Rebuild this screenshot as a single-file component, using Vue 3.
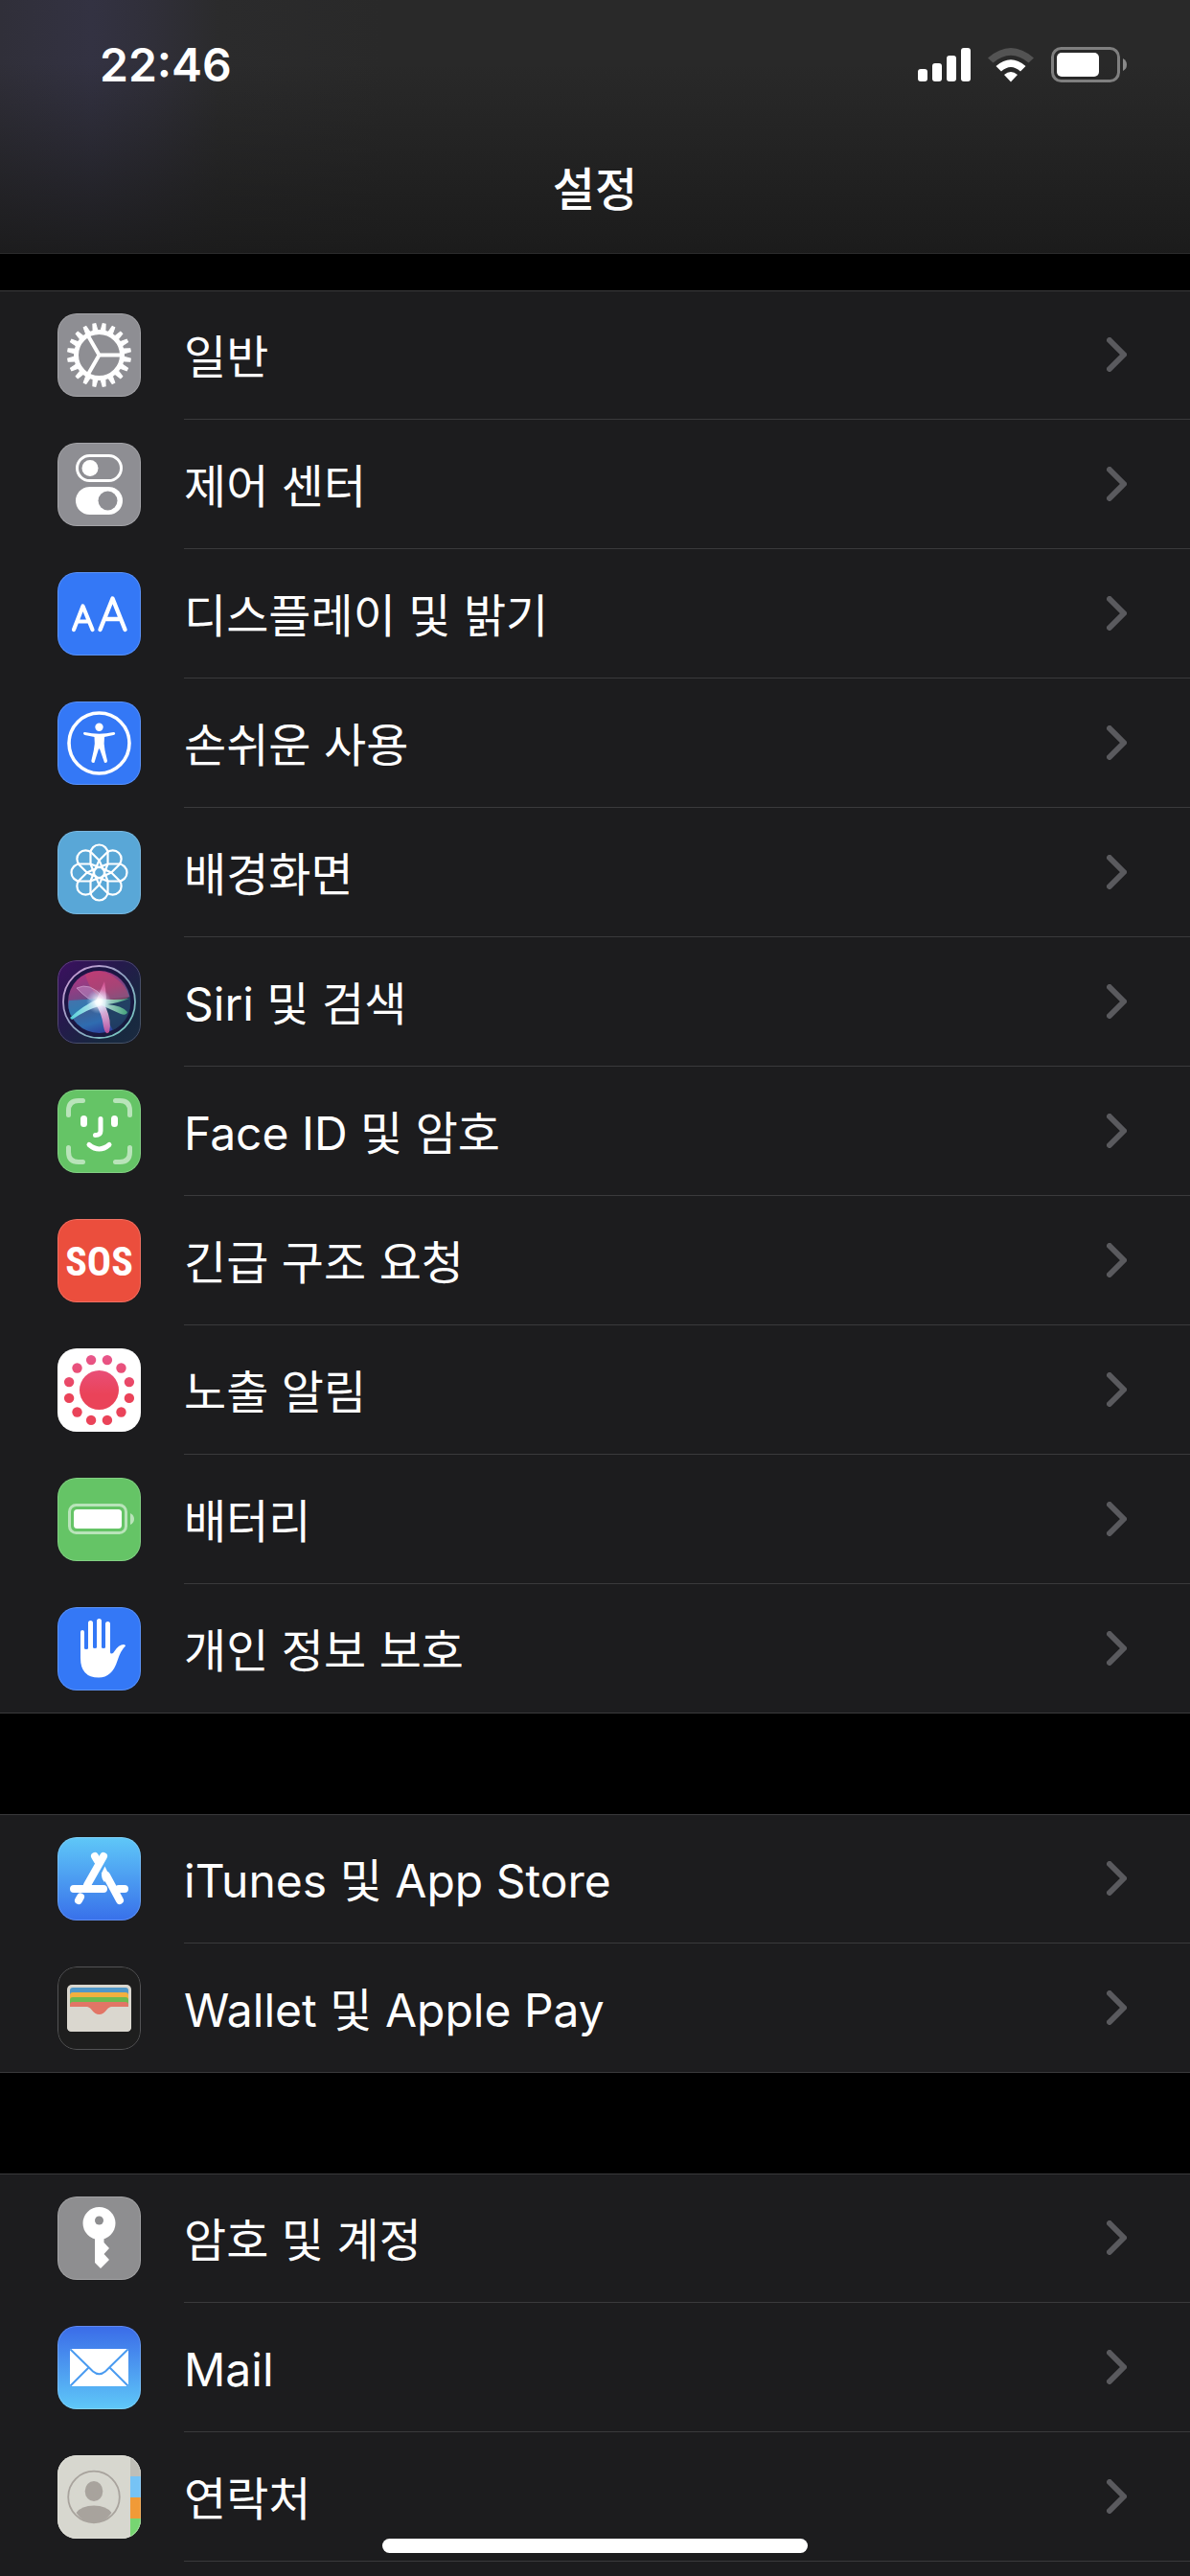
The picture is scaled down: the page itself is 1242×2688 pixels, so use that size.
<script setup>
const groups = [
  [
    { icon: 'gear', label: '일반' },
    { icon: 'switches', label: '제어 센터' },
    { icon: 'text-size', label: '디스플레이 및 밝기' },
    { icon: 'accessibility', label: '손쉬운 사용' },
    { icon: 'wallpaper', label: '배경화면' },
    { icon: 'siri', label: 'Siri 및 검색' },
    { icon: 'face', label: 'Face ID 및 암호' },
    { icon: 'sos', label: '긴급 구조 요청' },
    { icon: 'exposure', label: '노출 알림' },
    { icon: 'battery', label: '배터리' },
    { icon: 'hand', label: '개인 정보 보호' },
  ],
  [
    { icon: 'store', label: 'iTunes 및 App Store' },
    { icon: 'wallet', label: 'Wallet 및 Apple Pay' },
  ],
  [
    { icon: 'key', label: '암호 및 계정' },
    { icon: 'mail', label: 'Mail' },
    { icon: 'contacts', label: '연락처' },
  ],
]

const steps = (count, offset = 0) =>
  Array.from({ length: count }, (_, i) => (i * 360) / count + offset)
const teeth = steps(20, 9)
const petals = steps(8)
const dots = steps(12, 15)
</script>

<template>
  <div class="page">
    <header class="header">
      <div class="status">
        <time class="clock">22:46</time>
        <div class="indicators" aria-hidden="true">
          <svg class="signal" viewBox="0 0 55 36">
            <rect x="0" y="22" width="10" height="13" rx="3" />
            <rect x="15" y="16" width="10" height="19" rx="3" />
            <rect x="30" y="8" width="10" height="27" rx="3" />
            <rect x="45" y="0" width="10" height="35" rx="3" />
          </svg>
          <svg class="wifi" viewBox="0 0 48 36">
            <path d="M0 10.500 Q24 -10.500 48 10.500 L42.500 15.500 Q24 0 5.500 15.500 Z" fill="#535353" />
            <path d="M8.500 19 Q24 5.500 39.500 19 L34 24.500 Q24 15.500 14 24.500 Z" />
            <path d="M17 28 Q24 22 31 28 L24 35.500 Z" />
          </svg>
          <svg class="charge" viewBox="0 0 80 38">
            <rect x="1.500" y="1.500" width="69" height="34" rx="9" fill="none" stroke="#7f7f7f" stroke-width="3" />
            <rect x="6" y="6" width="44" height="25" rx="5" />
            <path d="M75 12 Q79 14 79 18.500 Q79 23 75 25 Z" fill="#8a8a8a" />
          </svg>
        </div>
      </div>
      <h1 class="title">설정</h1>
    </header>

    <main class="groups">
      <ul v-for="(group, g) in groups" :key="g" class="group">
        <li v-for="item in group" :key="item.icon" class="item">
          <a href="#" class="row">
            <span class="tile" :class="item.icon" aria-hidden="true">
              <svg viewBox="0 0 87 87">
                <g v-if="item.icon === 'gear'" fill="none" stroke="#fff">
                  <path
                    v-for="a in teeth"
                    :key="a"
                    d="M41 18.500 L42 10.500 H45 L46 18.500 Z"
                    :transform="`rotate(${a} 43.500 43.500)`"
                    fill="#fff"
                    stroke-width="1"
                  />
                  <circle cx="43.500" cy="43.500" r="24" stroke-width="5" />
                  <path d="M43.500 43.500 H67 M43.500 43.500 L31.700 23 M43.500 43.500 L31.700 64" stroke-width="4" />
                </g>

                <g v-else-if="item.icon === 'switches'">
                  <rect x="20.500" y="13.500" width="46" height="26" rx="13" fill="none" stroke="#fff" stroke-width="3" />
                  <circle cx="34" cy="26.500" r="8.500" fill="#fff" />
                  <rect x="19" y="46" width="49" height="29" rx="14.500" fill="#fff" />
                  <circle cx="52.500" cy="60.500" r="10" fill="#8e8e93" />
                </g>

                <g v-else-if="item.icon === 'text-size'" fill="none" stroke="#fff" stroke-linecap="round" stroke-linejoin="round">
                  <path d="M17 60 L26.500 35.500 L36.500 60 M20.500 51.500 H33" stroke-width="4.200" />
                  <path d="M44.500 60 L57.500 27.500 L70.500 60 M49 49 H66" stroke-width="4.400" />
                </g>

                <g v-else-if="item.icon === 'accessibility'" fill="#fff">
                  <circle cx="43.500" cy="43.500" r="31.500" fill="none" stroke="#fff" stroke-width="3.600" />
                  <circle cx="43.500" cy="26.800" r="4.200" />
                  <path
                    d="M28.500 32 Q43.500 35.500 58.500 32 Q60.500 32 60.200 33.500 Q60 34.800 58.500 35 L49 37 Q48 44 49.500 51 L52 62 Q51.800 64.500 49 63.800 L44.200 50 Q43.500 48.500 42.800 50 L38.500 63.800 Q35.500 64.500 35.300 62 L37.800 51 Q39.500 44 38.500 37 L28.500 35 Q27 34.500 27 33.300 Q27 32 28.500 32 Z"
                  />
                </g>

                <g v-else-if="item.icon === 'wallpaper'" fill="none" stroke="#fff" stroke-width="2.200">
                  <path
                    v-for="a in petals"
                    :key="a"
                    d="M43.500 38 L34.500 34.500 V23.500 A9 9 0 0 1 52.500 23.500 V34.500 Z"
                    :transform="`rotate(${a} 43.500 43.500)`"
                  />
                  <circle cx="43.500" cy="43.500" r="5.500" />
                </g>

                <g v-else-if="item.icon === 'siri'">
                  <defs>
                    <linearGradient id="siriTile" x1="0" y1="0" x2="1" y2="1">
                      <stop offset="0" stop-color="#3c1060" />
                      <stop offset="0.400" stop-color="#251a4c" />
                      <stop offset="0.750" stop-color="#17283f" />
                      <stop offset="1" stop-color="#1b2a40" />
                    </linearGradient>
                    <linearGradient id="siriOrb" x1="0.300" y1="0" x2="0.600" y2="1">
                      <stop offset="0" stop-color="#b03482" />
                      <stop offset="0.350" stop-color="#7d4484" />
                      <stop offset="0.550" stop-color="#3f5f92" />
                      <stop offset="0.800" stop-color="#2f6cb0" />
                      <stop offset="1" stop-color="#2b3f9c" />
                    </linearGradient>
                    <linearGradient id="siriRing" x1="0" y1="0" x2="1" y2="1">
                      <stop offset="0" stop-color="#d49ad8" />
                      <stop offset="0.500" stop-color="#8fa3c0" />
                      <stop offset="1" stop-color="#70d0c0" />
                    </linearGradient>
                    <radialGradient id="siriGlow">
                      <stop offset="0" stop-color="#fff" />
                      <stop offset="0.250" stop-color="#fff" stop-opacity="0.800" />
                      <stop offset="1" stop-color="#b9d8ff" stop-opacity="0" />
                    </radialGradient>
                    <linearGradient id="siriMint" x1="0" y1="0" x2="1" y2="0">
                      <stop offset="0" stop-color="#57e5e5" />
                      <stop offset="0.500" stop-color="#e8ffff" />
                      <stop offset="1" stop-color="#3fae76" />
                    </linearGradient>
                    <linearGradient id="siriPink" x1="0" y1="0" x2="0" y2="1">
                      <stop offset="0" stop-color="#e8569f" stop-opacity="0.700" />
                      <stop offset="0.450" stop-color="#ffe5ff" />
                      <stop offset="1" stop-color="#cf4f9b" />
                    </linearGradient>
                  </defs>
                  <rect width="87" height="87" fill="url(#siriTile)" />
                  <circle cx="43.500" cy="43.500" r="37.500" fill="#181440" fill-opacity="0.700" stroke="url(#siriRing)" stroke-width="1.800" />
                  <circle cx="43.500" cy="43.500" r="32.500" fill="url(#siriOrb)" />
                  <path d="M44 42 L76 38 Q79 62 58 73 Q51 62 44 42 Z" fill="#1f3a58" fill-opacity="0.850" />
                  <path d="M29 15 Q43 7 57 16 Q72 26 75 38 Q70 43 50 42 Q35 36 29 15 Z" fill="#cf4468" fill-opacity="0.500" />
                  <path d="M20 29 Q34 22 48 39 L43 45 Q32 42 20 29 Z" fill="#d9a5df" fill-opacity="0.400" stroke="#e5c1e8" stroke-opacity="0.500" />
                  <path d="M12 42 L44 40 L14 58 Q10 50 12 42 Z" fill="#2c86bd" fill-opacity="0.700" />
                  <path d="M49 22 Q52 40 50 48 Q57 64 54 75 Q50 79 48 69 Q46 54 39 45 Z" fill="url(#siriPink)" fill-opacity="0.850" />
                  <path d="M13 60 Q27 47 43 40 Q59 42 75 40 Q62 45 52 46 Q67 47 73 54 Q72 58 66 56 L46 47 Q29 52 15 62 Z" fill="url(#siriMint)" fill-opacity="0.850" />
                  <circle cx="43" cy="43" r="13" fill="url(#siriGlow)" />
                </g>

                <g v-else-if="item.icon === 'face'" fill="none" stroke="#fff" stroke-linecap="round" stroke-width="5">
                  <path
                    d="M11.500 26.500 V22 Q11.500 11.500 22 11.500 H26.500 M60.500 11.500 H65 Q75.500 11.500 75.500 22 V26.500 M75.500 60.500 V65 Q75.500 75.500 65 75.500 H60.500 M26.500 75.500 H22 Q11.500 75.500 11.500 65 V60.500"
                    stroke-opacity="0.550"
                  />
                  <path d="M27.500 30.500 V35.500 M59.500 30.500 V35.500" stroke-width="7" />
                  <path d="M45 30.500 V43 Q45 47.500 39.500 47.500" />
                  <path d="M33 57.500 Q43.500 66.500 54 57.500" />
                </g>

                <text v-else-if="item.icon === 'sos'" class="sos-text" x="43.500" y="59" text-anchor="middle">SOS</text>

                <g v-else-if="item.icon === 'exposure'">
                  <defs>
                    <linearGradient id="virus" gradientUnits="userSpaceOnUse" x1="0" y1="8" x2="0" y2="48">
                      <stop offset="0" stop-color="#e8568a" />
                      <stop offset="1" stop-color="#ea4359" />
                    </linearGradient>
                  </defs>
                  <circle cx="43.500" cy="43.500" r="20.500" fill="url(#virus)" />
                  <circle
                    v-for="a in dots"
                    :key="a"
                    :cx="43.5 + 32.5 * Math.sin((a * Math.PI) / 180)"
                    :cy="43.5 - 32.5 * Math.cos((a * Math.PI) / 180)"
                    r="5.200"
                    fill="url(#virus)"
                  />
                </g>

                <g v-else-if="item.icon === 'battery'" fill="#fff">
                  <rect x="12.500" y="28.500" width="59" height="29" rx="7" fill="none" stroke="#fff" stroke-opacity="0.550" stroke-width="3" />
                  <rect x="17" y="33" width="50" height="20" rx="3.500" />
                  <path d="M76 37 Q80 39 80 43 Q80 47 76 49 Z" fill-opacity="0.550" />
                </g>

                <path
                  v-else-if="item.icon === 'hand'"
                  fill="#fff"
                  d="M24 26 Q24 24 26 24 Q28 24 28 26 V43 Q28 44 30 44 Q32 44 32 43 V16.500 Q32 14 34.500 14 Q37 14 37 16.500 V42 Q37 43 39 43 Q41 43 41 42 V14.500 Q41 12 43.500 12 Q46 12 46 14.500 V42 Q46 43 48 43 Q50 43 50 42 V17.500 Q50 15 52.500 15 Q55 15 55 17.500 V47 Q55 48.500 56.500 48.500 Q58 48.500 59.500 46 Q64 39 69 39 Q71 39 71 40.500 Q66 45 62.500 56 Q57 73.500 43 73.500 Q24 73.500 24 53 Z"
                />

                <g v-else-if="item.icon === 'store'" fill="none" stroke="#fff" stroke-linecap="round" stroke-width="8">
                  <path d="M48 20 L31 50" />
                  <path d="M39 20 L42 25" />
                  <path d="M51 40 L65 66" />
                  <path d="M17 54 H48 M64 54 H70" />
                  <path d="M24 62.500 L22 66" />
                  <path d="M49.500 30.500 L46 37.500 Q45.500 43 49 47 L54 40 Z" fill="#fff" stroke="none" />
                </g>

                <g v-else-if="item.icon === 'wallet'">
                  <rect x="10" y="19" width="67" height="49" rx="5" fill="#dad7cf" />
                  <path d="M13 42 V25 Q13 22 16 22 H71 Q74 22 74 25 V42 Z" fill="#5097c8" />
                  <path d="M13 42 V30 Q13 27 16 27 H71 Q74 27 74 30 V42 Z" fill="#f2b03f" />
                  <path d="M13 42 V35 Q13 32 16 32 H71 Q74 32 74 35 V42 Z" fill="#6dba50" />
                  <path d="M13 42 V40 Q13 37 16 37 H71 Q74 37 74 40 V42 Z" fill="#e27566" />
                  <path d="M10 42 H77 V63 Q77 68 72 68 H15 Q10 68 10 63 Z" fill="#dad7cf" />
                  <path d="M28 41.500 Q33 41.500 35.500 45 Q39 50 43.500 50 Q48 50 51.500 45 Q54 41.500 59 41.500 Z" fill="#e27566" />
                </g>

                <g v-else-if="item.icon === 'key'">
                  <circle cx="43.500" cy="28" r="17" fill="#fff" />
                  <path d="M39 42 H48.500 V48 L54 54 L48.500 60 L54 66 L45 75 L39 69 Z" fill="#fff" />
                  <circle cx="43.500" cy="25" r="4.500" fill="#8e8e90" />
                </g>

                <g v-else-if="item.icon === 'mail'">
                  <rect x="13" y="24" width="61" height="39" rx="2" fill="#fff" />
                  <path
                    d="M13.500 24.500 L37 47.500 Q43.500 53 50 47.500 L73.500 24.500 M13.500 62.500 L32.500 43.500 M73.500 62.500 L54.500 43.500"
                    fill="none"
                    stroke="#4a9bf0"
                    stroke-width="2"
                  />
                </g>

                <g v-else-if="item.icon === 'contacts'">
                  <rect width="87" height="87" fill="#d7d7cf" />
                  <rect x="76" width="11" height="22" fill="#bfbeb7" />
                  <rect x="76" y="22" width="11" height="22" fill="#76c3f5" />
                  <rect x="76" y="44" width="11" height="22" fill="#f09a37" />
                  <rect x="76" y="66" width="11" height="21" fill="#77d572" />
                  <circle cx="38" cy="43.500" r="26.800" fill="none" stroke="#a8a39d" stroke-width="1.800" />
                  <ellipse cx="38" cy="37.500" rx="9.300" ry="10.500" fill="#a8a39d" />
                  <path d="M19.500 60 Q25 52.500 38 52.500 Q51 52.500 56.500 60 Q49.500 70.500 38 70.500 Q26.500 70.500 19.500 60 Z" fill="#a8a39d" />
                </g>
              </svg>
            </span>
            <span class="content">
              <span class="label">{{ item.label }}</span>
              <svg class="chevron" viewBox="0 0 21 36" aria-hidden="true">
                <path d="M3 3 L18 18 L3 33" />
              </svg>
            </span>
          </a>
        </li>
      </ul>
    </main>

    <div class="home-bar" aria-hidden="true"></div>
  </div>
</template>

<style>
body {
  margin: 0;
  background: #000;
}
</style>

<style scoped>
.page {
  display: flex;
  flex-direction: column;
  min-height: 100vh;
  background: #000;
  color: #fff;
  font-family: Inter, "Noto Sans CJK KR", sans-serif;
  font-size: 48px;
  line-height: 64px;
}

.header {
  border-bottom: 1px solid #2b2b2c;
  background:
    linear-gradient(to bottom, rgba(26, 26, 26, 0) 25%, rgba(26, 26, 26, 0.9) 100%),
    linear-gradient(to right, #302f39 0, #333242 96px, #302f39 160px, #2b2b2c 230px, #292929 400px);
}

.status {
  display: flex;
  align-items: center;
  justify-content: space-between;
  height: 136px;
  padding: 0 65px 0 104px;
}

.clock {
  font-weight: 600;
}

.indicators {
  display: flex;
  align-items: center;
  gap: 18px;
  fill: #fff;
}

.signal {
  width: 55px;
  height: 36px;
}

.wifi {
  width: 48px;
  height: 36px;
}

.charge {
  width: 80px;
  height: 38px;
}

.title {
  margin: 0;
  padding: 30px 0 34px;
  text-align: center;
  font-size: 48px;
  font-weight: 500;
}

.groups {
  display: flex;
  flex: 1;
  flex-direction: column;
  gap: 105px;
  padding-top: 38px;
}

.group {
  margin: 0;
  padding: 0;
  background: #1c1c1e;
  box-shadow: inset 0 1px #3a3a3c, inset 0 -1px #3a3a3c;
  list-style: none;
}

.group:last-child {
  flex: 1;
  box-shadow: inset 0 1px #3a3a3c;
}

.row {
  display: flex;
  align-items: center;
  gap: 45px;
  height: 135px;
  padding-left: 60px;
  color: inherit;
  text-decoration: none;
}

.content {
  display: flex;
  flex: 1;
  align-self: stretch;
  align-items: center;
  justify-content: space-between;
  padding-right: 66px;
  border-bottom: 1px solid #3a3a3c;
}

.label {
  padding-top: 6px;
}

.chevron {
  width: 21px;
  height: 36px;
  fill: none;
  stroke: #5a5a5e;
  stroke-width: 6;
  stroke-linecap: round;
  stroke-linejoin: round;
}

.tile {
  position: relative;
  width: 87px;
  height: 87px;
  overflow: hidden;
  border-radius: 20px;
}

.tile::after {
  position: absolute;
  inset: 0;
  border: 1px solid rgba(255, 255, 255, 0.2);
  border-radius: inherit;
  content: "";
}

.tile svg {
  display: block;
  width: 100%;
  height: 100%;
}

.gear,
.switches {
  background: #8e8e93;
}

.text-size,
.accessibility,
.hand {
  background: #3478f6;
}

.wallpaper {
  background: #59a7d7;
}

.siri {
  background: #251a4c;
}

.face,
.battery {
  background: #65c466;
}

.sos {
  background: #eb4e3d;
}

.exposure {
  background: #fff;
}

.store {
  background: linear-gradient(#5fc8f8, #3870ea);
}

.wallet {
  background: #1e1e1e;
}

.wallet::after {
  border-color: #535355;
}

.key {
  background: #8e8e90;
}

.mail {
  background: linear-gradient(#3a6be8, #5fc8f8);
}

.contacts {
  background: #d7d7cf;
}

.sos-text {
  fill: #fff;
  font-family: "Liberation Sans Narrow", "Roboto Condensed", "Open Sans Condensed", Roboto, sans-serif;
  font-size: 42px;
  font-weight: 700;
}

.home-bar {
  position: fixed;
  bottom: 24px;
  left: 50%;
  width: 444px;
  height: 15px;
  margin-left: -222px;
  border-radius: 8px;
  background: #fff;
}
</style>
